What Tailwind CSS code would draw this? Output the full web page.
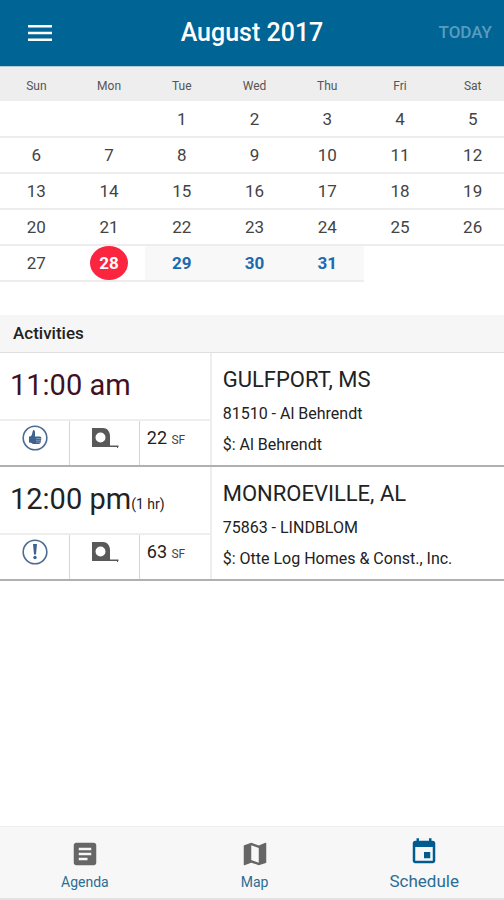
<!DOCTYPE html>
<html lang="en">
<head>
  <meta charset="UTF-8">
  <meta name="viewport" content="width=device-width, initial-scale=1.0">
  <title>Schedule</title>
  <script src="https://cdn.jsdelivr.net/npm/@tailwindcss/browser@4"></script>
</head>
<body class="min-h-screen flex flex-col overflow-x-hidden bg-white text-[#222] font-['Roboto',sans-serif]">
  <!-- Header -->
  <header class="h-[67px] grid grid-cols-[1fr_auto_1fr] items-center px-3 bg-[#006494] border-b border-[#b5cbd8] text-white">
    <button aria-label="Menu" class="justify-self-start p-4">
      <svg class="w-6 h-4" viewBox="0 0 24 16" fill="currentColor">
        <path d="M0 0h24v2.600H0zM0 6.700h24v2.600H0zM0 13.400h24V16H0z"/>
      </svg>
    </button>
    <h1 class="text-[25px] font-medium">August 2017</h1>
    <button class="justify-self-end text-[17px] font-medium text-[#5a9cbd]">TODAY</button>
  </header>

  <!-- Calendar -->
  <table class="w-[101%] table-fixed border-collapse text-center">
    <thead>
      <tr class="h-[34px] bg-[#eeeeee] text-xs text-[#555]">
        <th class="pt-1 font-normal">Sun</th>
        <th class="pt-1 font-normal">Mon</th>
        <th class="pt-1 font-normal">Tue</th>
        <th class="pt-1 font-normal">Wed</th>
        <th class="pt-1 font-normal">Thu</th>
        <th class="pt-1 font-normal">Fri</th>
        <th class="pt-1 font-normal">Sat</th>
      </tr>
    </thead>
    <tbody id="days" class="text-[17px] leading-5 text-[#444]"></tbody>
  </table>

  <!-- Activities -->
  <main class="flex-1 mt-[33px]">
    <h2 class="h-[38px] flex items-center px-[13px] pt-px bg-[#f6f6f6] border-b border-[#dedede] text-[17px] font-medium">Activities</h2>

    <article class="grid grid-cols-[42%_1fr] border-b-2 border-[#b0b0b0]">
      <div class="flex flex-col border-r-2 border-[#eeeeee]">
        <p class="h-[66px] flex items-center px-[10px] text-[29px] text-[#42101f]">11:00 am</p>
        <div class="h-[46px] grid grid-cols-3 border-t-2 border-[#eeeeee]">
          <div class="flex justify-center pt-1 pl-px border-r border-[#d5d5d5]">
            <svg class="w-[26px] h-[26px]" viewBox="0 0 26 26" role="img" aria-label="Confirmed">
              <circle cx="13" cy="13" r="11.800" fill="#fff" stroke="#4d6c91" stroke-width="1.600"/>
              <path fill="#3d628f" d="M11 5c1.300 0 2 .8 2 2v4.500h4.500c1.300 0 2 .8 1.800 2L18.700 17c-.2 1.300-.9 2-2 2H11l-2-1.200-2-.3v-6l2-.2 1-2z"/>
              <path stroke="#93a9c2" stroke-width=".7" d="M14 13.500h5M14 15.300h4.800M14 17.100h4.500"/>
            </svg>
          </div>
          <div class="flex justify-center pt-[7px] pl-px border-r border-[#d5d5d5]">
            <svg class="w-7 h-5" viewBox="0 0 28 20" fill="#595959" role="img" aria-label="Measure">
              <path fill-rule="evenodd" d="M1 0h11c4 0 7 3.500 7 8v9.500h8.500V19H27v1h-1v-1H1zM9.500 4.500a5 5 0 1 0 0 10 5 5 0 0 0 0-10z"/>
            </svg>
          </div>
          <p class="pl-[7px] pt-[3px] text-lg leading-7">22 <span class="text-xs text-[#444]">SF</span></p>
        </div>
      </div>
      <div class="pl-[11px] pt-[9px]">
        <h3 class="text-[22px] leading-9">GULFPORT, MS</h3>
        <p class="text-base leading-[31px]">81510 - Al Behrendt</p>
        <p class="text-base leading-[31px]">$: Al Behrendt</p>
      </div>
    </article>

    <article class="grid grid-cols-[42%_1fr] border-b-2 border-[#b0b0b0]">
      <div class="flex flex-col border-r-2 border-[#eeeeee]">
        <p class="h-[66px] flex items-center px-[10px] text-[29px]"><span>12:00 pm<span class="text-sm">(1 hr)</span></span></p>
        <div class="h-[46px] grid grid-cols-3 border-t-2 border-[#eeeeee]">
          <div class="flex justify-center pt-1 pl-px border-r border-[#d5d5d5]">
            <svg class="w-[26px] h-[26px]" viewBox="0 0 26 26" role="img" aria-label="Attention">
              <circle cx="13" cy="13" r="11.800" fill="#fff" stroke="#4d6c91" stroke-width="1.600"/>
              <path fill="#3d628f" d="M11 5h4l-1 10.500h-2z"/>
              <circle cx="13" cy="18.500" r="1.700" fill="#3d628f"/>
            </svg>
          </div>
          <div class="flex justify-center pt-[7px] pl-px border-r border-[#d5d5d5]">
            <svg class="w-7 h-5" viewBox="0 0 28 20" fill="#595959" role="img" aria-label="Measure">
              <path fill-rule="evenodd" d="M1 0h11c4 0 7 3.500 7 8v9.500h8.500V19H27v1h-1v-1H1zM9.500 4.500a5 5 0 1 0 0 10 5 5 0 0 0 0-10z"/>
            </svg>
          </div>
          <p class="pl-[7px] pt-[3px] text-lg leading-7">63 <span class="text-xs text-[#444]">SF</span></p>
        </div>
      </div>
      <div class="pl-[11px] pt-[9px]">
        <h3 class="text-[22px] leading-9">MONROEVILLE, AL</h3>
        <p class="text-base leading-[31px]">75863 - LINDBLOM</p>
        <p class="text-base leading-[31px]">$: Otte Log Homes &amp; Const., Inc.</p>
      </div>
    </article>
  </main>

  <!-- Bottom navigation -->
  <nav class="w-[101%] grid grid-cols-3 h-[74px] bg-[#f7f7f7] border-t border-b-2 border-t-[#eeeeee] border-b-[#e2e2e2] text-[#2b6d94]">
    <a href="#" class="flex flex-col items-center pt-3 text-sm">
      <svg class="w-[30px] h-[30px]" viewBox="0 0 24 24" fill="#666">
        <path d="M19 3H5c-1.100 0-2 .9-2 2v14c0 1.100.9 2 2 2h14c1.100 0 2-.9 2-2V5c0-1.100-.9-2-2-2zm-5 14H7v-2h7v2zm3-4H7v-2h10v2zm0-4H7V7h10v2z"/>
      </svg>
      <span class="mt-[3px]">Agenda</span>
    </a>
    <a href="#" class="flex flex-col items-center pt-3 text-sm">
      <svg class="w-[30px] h-[30px]" viewBox="0 0 24 24" fill="#666">
        <path d="M20.500 3l-.16.03L15 5.100 9 3 3.360 4.900c-.21.07-.36.25-.36.480V20.500c0 .28.22.5.5.5l.16-.03L9 18.900l6 2.100 5.640-1.900c.21-.07.36-.25.36-.48V3.500c0-.28-.22-.5-.5-.5zM15 19l-6-2.110V5l6 2.110V19z"/>
      </svg>
      <span class="mt-[3px]">Map</span>
    </a>
    <a href="#" aria-current="page" class="flex flex-col items-center pt-[10px] text-[17px] leading-6">
      <svg class="w-[30px] h-[30px]" viewBox="0 0 24 24" fill="#005b91">
        <path d="M17 12h-5v5h5v-5zM16 1v2H8V1H6v2H5c-1.110 0-1.990.9-1.990 2L3 19c0 1.100.89 2 2 2h14c1.100 0 2-.9 2-2V5c0-1.100-.9-2-2-2h-1V1h-2zm3 18H5V8h14v11z"/>
      </svg>
      <span class="mt-[2px]">Schedule</span>
    </a>
  </nav>

  <script>
    const daysEl = document.getElementById('days');
    const firstWeekday = 2;
    const lastDay = 31;
    const selected = 28;

    // Build the month grid week by week
    for (let week = 0; week < 5; week++) {
      const row = document.createElement('tr');
      row.className = 'h-9';
      for (let i = 0; i < 7; i++) {
        const day = week * 7 + i - firstWeekday + 1;
        const cell = document.createElement('td');
        if (day <= lastDay) {
          cell.className = 'p-0 border-b-2 border-[#ededed]';
        }
        if (day > selected && day <= lastDay) {
          cell.className = 'p-0 border-b-2 border-[#ededed] bg-[#f8f8f8]';
        }
        if (day > 0 && day <= lastDay) {
          const btn = document.createElement('button');
          btn.textContent = day;
          if (day === selected) {
            btn.className = 'block mx-auto w-[38px] h-[34px] rounded-[50%] bg-[#fb2540] text-white font-bold';
          } else if (day > selected) {
            btn.className = 'block w-full font-bold text-[#1d6aae]';
          } else {
            btn.className = 'block w-full';
          }
          cell.appendChild(btn);
        }
        row.appendChild(cell);
      }
      daysEl.appendChild(row);
    }
  </script>
</body>
</html>
